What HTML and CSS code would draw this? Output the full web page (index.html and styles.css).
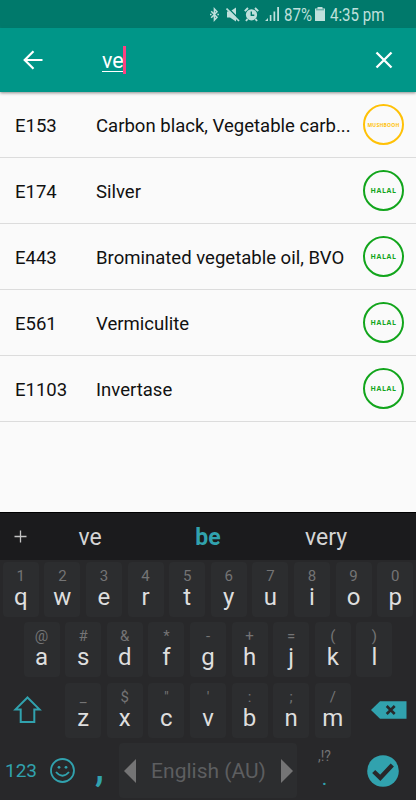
FILE: index.html
```
<!DOCTYPE html>
<html lang="en">
<head>
<meta charset="UTF-8">
<meta name="viewport" content="width=device-width, initial-scale=1">
<title>Search</title>
<link rel="stylesheet" href="styles.css">
</head>
<body>
<div class="status">
  <svg class="bt" width="9" height="15" viewBox="0 0 9 15"><path d="M1.2 4.2L7 10.2L4.4 13V2L7 4.8L1.2 10.8" fill="none" stroke="#bfe0dc" stroke-width="1.5"/><path d="M0 6.7h1.6v1.6H0zM7.3 6.7h1.6v1.6H7.3z" fill="#bfe0dc"/></svg>
  <svg class="mute" width="14" height="15" viewBox="0 0 14 15"><path d="M1 4.500h3l6-4v14L4 10.500H1z" fill="#bfe0dc"/><path d="M1.500 .5l13 13" stroke="#00796b" stroke-width="1.500"/><path d="M.5 1.500l12.500 12.500" stroke="#bfe0dc" stroke-width="1.700"/></svg>
  <svg class="alarm" width="15" height="15" viewBox="0 0 15 15"><circle cx="7.500" cy="7.800" r="5.600" fill="#bfe0dc"/><path d="M7.300 4.500v3.800h3" fill="none" stroke="#00796b" stroke-width="1.400"/><path d="M.8 4.200L4 1M14.200 4.200L11 1M3.500 12l-1.500 2M11.500 12l1.500 2" stroke="#bfe0dc" stroke-width="1.900"/></svg>
  <svg class="signal" width="15" height="14" viewBox="0 0 15 14"><path d="M0 14l3-3v3zM4.800 8h1.600v6H4.800zM8.500 4.500h1.700V14H8.500zM12.200 0H14v14h-1.800z" fill="#bfe0dc"/></svg>
  <span class="percent">87%</span>
  <svg class="battery" width="10" height="14" viewBox="0 0 10 14"><path d="M2.500 0h5v1.500H10V14H0V1.500h2.500z" fill="#bfe0dc"/><path d="M1 2.800h8" stroke="#4b9f96" stroke-width="1"/></svg>
  <span class="time">4:35 pm</span>
</div>
<div class="toolbar">
  <svg class="back" width="20" height="20" viewBox="0 0 20 20"><path d="M10.500 1.200L1.700 10l8.800 8.800M2 10h17.500" fill="none" stroke="#fff" stroke-width="2.200"/></svg>
  <div class="query"><span class="typed">ve</span><span class="cursor"></span></div>
  <svg class="clear" width="18" height="18" viewBox="0 0 18 18"><path d="M1.500 1.500l15 15M16.500 1.500l-15 15" stroke="#fff" stroke-width="2.300"/></svg>
</div>
<div class="list">
  <div class="item"><span class="code">E153</span><span class="name">Carbon black, Vegetable carb...</span><span class="badge mushbooh">MUSHBOOH</span></div>
  <div class="item"><span class="code">E174</span><span class="name">Silver</span><span class="badge">HALAL</span></div>
  <div class="item"><span class="code">E443</span><span class="name">Brominated vegetable oil, BVO</span><span class="badge">HALAL</span></div>
  <div class="item"><span class="code">E561</span><span class="name">Vermiculite</span><span class="badge">HALAL</span></div>
  <div class="item"><span class="code">E1103</span><span class="name">Invertase</span><span class="badge">HALAL</span></div>
</div>
<div class="keyboard">
  <div class="suggest">
    <svg class="plus" width="13" height="13" viewBox="0 0 13 13"><path d="M6.500 .5v12M.5 6.500h12" stroke="#c4c4c4" stroke-width="1.300"/></svg>
    <span class="word">ve</span>
    <span class="word best">be</span>
    <span class="word">very</span>
  </div>
  <div class="row">
    <div class="key"><i>1</i><b>q</b></div>
    <div class="key"><i>2</i><b>w</b></div>
    <div class="key"><i>3</i><b>e</b></div>
    <div class="key"><i>4</i><b>r</b></div>
    <div class="key"><i>5</i><b>t</b></div>
    <div class="key"><i>6</i><b>y</b></div>
    <div class="key"><i>7</i><b>u</b></div>
    <div class="key"><i>8</i><b>i</b></div>
    <div class="key"><i>9</i><b>o</b></div>
    <div class="key"><i>0</i><b>p</b></div>
  </div>
  <div class="row middle">
    <div class="key"><i>@</i><b>a</b></div>
    <div class="key"><i>#</i><b>s</b></div>
    <div class="key"><i>&amp;</i><b>d</b></div>
    <div class="key"><i>*</i><b>f</b></div>
    <div class="key"><i>-</i><b>g</b></div>
    <div class="key"><i>+</i><b>h</b></div>
    <div class="key"><i>=</i><b>j</b></div>
    <div class="key"><i>(</i><b>k</b></div>
    <div class="key"><i>)</i><b>l</b></div>
  </div>
  <div class="row">
    <div class="side shift"><svg width="29" height="28" viewBox="0 0 29 28"><path d="M14.500 1.500L26.500 13.400H21.300V26H7.700V13.400H2.500z" fill="none" stroke="#31a2ae" stroke-width="2"/></svg></div>
    <div class="key"><i>_</i><b>z</b></div>
    <div class="key"><i>$</i><b>x</b></div>
    <div class="key"><i>"</i><b>c</b></div>
    <div class="key"><i>'</i><b>v</b></div>
    <div class="key"><i>:</i><b>b</b></div>
    <div class="key"><i>;</i><b>n</b></div>
    <div class="key"><i>/</i><b>m</b></div>
    <div class="side delete"><svg width="36" height="18" viewBox="0 0 36 18"><path d="M0 9L9 .3H35.500V17.700H9z" fill="#31a2ae"/><path d="M15.700 5l8 8M23.700 5l-8 8" stroke="#28282a" stroke-width="2.600"/></svg></div>
  </div>
  <div class="row bottom">
    <div class="numbers">123</div>
    <div class="smile"><svg width="26" height="26" viewBox="0 0 26 26"><g fill="none" stroke="#31a2ae" stroke-width="1.800"><circle cx="12.500" cy="12.500" r="11.500"/><path d="M6 14q6.500 7.500 13 0"/></g><circle cx="9" cy="9.300" r="1.400" fill="#31a2ae"/><circle cx="16" cy="9.300" r="1.400" fill="#31a2ae"/></svg></div>
    <div class="comma">,</div>
    <div class="space">
      <svg width="12" height="24" viewBox="0 0 12 24"><path d="M12 0v24L0 12z" fill="#747475"/></svg>
      <span>English (AU)</span>
      <svg width="12" height="24" viewBox="0 0 12 24"><path d="M0 0v24l12-12z" fill="#747475"/></svg>
    </div>
    <div class="dot"><i>,!?</i><b>.</b></div>
    <div class="done"><svg width="32" height="32" viewBox="0 0 32 32"><circle cx="16" cy="16" r="15.800" fill="#31a2ae"/><path d="M6.700 16.500l6.600 6.300L25.300 10" fill="none" stroke="#28282a" stroke-width="4.400"/></svg></div>
  </div>
</div>
</body>
</html>
```

FILE: styles.css
```
* {
  box-sizing: border-box;
}

body {
  margin: 0;
  width: 416px;
  height: 800px;
  overflow: hidden;
  display: flex;
  flex-direction: column;
  background: #fafafa;
  font-family: Roboto, "Liberation Sans", sans-serif;
}

svg {
  display: block;
  flex: none;
}

.status {
  height: 28px;
  flex: none;
  display: flex;
  align-items: center;
  padding-left: 210px;
  background: linear-gradient(#00796b 26px, #008577);
  color: #bfe0dc;
  font-size: 17.5px;
  white-space: nowrap;
}

.mute { margin-left: 7px; }
.alarm { margin-left: 4px; }
.signal { margin-left: 6px; }

.percent, .time {
  transform-origin: 0 50%;
  transform: scaleX(.86);
  padding-top: 2px;
}

.percent {
  width: 28px;
  margin-left: 4px;
}

.battery { margin-left: 3px; }
.time { margin-left: 5px; }

.toolbar {
  height: 64px;
  flex: none;
  display: flex;
  align-items: center;
  padding: 0 23px 0 22.5px;
  background: #009688;
  box-shadow: 0 1px 3px rgba(0, 0, 0, .45);
  z-index: 1;
}

.query {
  flex: 1;
  display: flex;
  align-items: center;
  margin-left: 59px;
  color: #fff;
}

.typed {
  border-bottom: 1px solid #fff;
  font-size: 21.5px;
  line-height: 20px;
  padding: 3px 0 0 .5px;
}

.cursor {
  width: 3px;
  height: 28px;
  margin-left: -1px;
  background: #ff4081;
}

.list {
  height: 420px;
  flex: none;
}

.item {
  height: 66px;
  display: flex;
  align-items: center;
  padding: 0 12px 0 15px;
  border-bottom: 1px solid #dcdcdc;
  color: #111;
  font-size: 18.55px;
}

.code {
  width: 81px;
  padding-top: 2px;
}

.name {
  width: 255px;
  padding-top: 2px;
  white-space: nowrap;
}

.badge {
  width: 41px;
  height: 41px;
  margin-left: auto;
  display: flex;
  align-items: center;
  justify-content: center;
  flex: none;
  border: 2px solid #12a51c;
  border-radius: 50%;
  color: #12a51c;
  font: bold 7px "Open Sans", sans-serif;
  letter-spacing: .6px;
}

.mushbooh {
  border-color: #ffc107;
  color: #ffc107;
  font-size: 5px;
  letter-spacing: .25px;
}

.keyboard {
  height: 288px;
  background: #28282a;
  border-top: 1px solid #000;
}

.suggest {
  height: 47px;
  display: flex;
  align-items: center;
  padding: 0 31px 0 14px;
  background: #1b1b1d;
  color: #d5d5d5;
  font-size: 23px;
}

.plus { margin-right: 4px; }

.word {
  width: 118px;
  padding-top: 1px;
  text-align: center;
}

.best {
  color: #31a2ae;
  font-weight: bold;
}

.row {
  height: 60.4px;
  display: flex;
  padding-top: 2px;
}

.middle {
  padding-left: 20.8px;
}

.key {
  width: 36px;
  height: 55px;
  margin: 0 2.8px;
  border-radius: 4px;
  background: #2c2d2f;
  display: flex;
  flex-direction: column;
  align-items: center;
}

.key i, .dot i {
  color: #747475;
  font-style: normal;
  font-size: 15px;
  line-height: 18px;
  padding-top: 5px;
}

.key b, .dot b {
  color: #dedede;
  font-weight: normal;
  font-size: 24px;
  line-height: 24px;
}

.side {
  width: 62.4px;
  height: 55px;
  display: flex;
  align-items: center;
}

.shift { padding-left: 13px; }
.delete { padding-left: 17px; }

.bottom {
  color: #31a2ae;
}

.numbers {
  width: 50px;
  padding-left: 5px;
  font-size: 19px;
  line-height: 55px;
}

.smile {
  width: 38px;
  height: 55px;
  display: flex;
  align-items: center;
}

.comma {
  width: 31px;
  padding-left: 7px;
  font-size: 40px;
  font-weight: 500;
  line-height: 50px;
}

.space {
  width: 178px;
  height: 55px;
  display: flex;
  align-items: center;
  justify-content: space-between;
  padding: 0 4px 0 5px;
  border-radius: 4px;
  background: #2c2d2f;
  color: #5d5e60;
  font-size: 21px;
}

.dot {
  width: 55px;
  display: flex;
  flex-direction: column;
  align-items: center;
}

.dot i {
  font-size: 14px;
  line-height: 16px;
}

.dot b {
  color: #31a2ae;
  font-size: 21px;
  line-height: 28px;
}

.done {
  height: 55px;
  margin-left: 14.5px;
  display: flex;
  align-items: center;
}
```
